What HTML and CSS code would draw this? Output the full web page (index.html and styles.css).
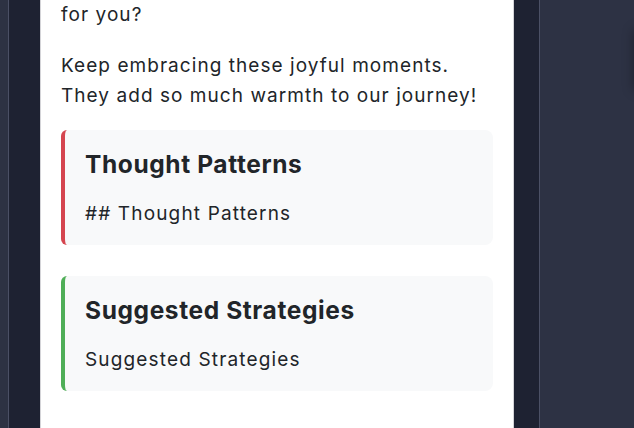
FILE: index.html
```html
<!DOCTYPE html>
<html>
<head>
<meta charset="utf-8">
<link rel="stylesheet" href="styles.css">
</head>
<body>
<div class="app">
  <div class="side-left"></div>
  <div class="gutter-left"></div>
  <main class="panel">
    <div class="content">
      <p class="para">for you?</p>
      <p class="para para-last">Keep embracing these joyful moments.<br>They add so much warmth to our journey!</p>
      <section class="card card-red">
        <h2 class="card-title">Thought Patterns</h2>
        <p class="card-text">## Thought Patterns</p>
      </section>
      <section class="card card-green">
        <h2 class="card-title">Suggested Strategies</h2>
        <p class="card-text">Suggested Strategies</p>
      </section>
    </div>
  </main>
  <div class="gutter-right"></div>
  <div class="side-right"><div class="edge-shadow"></div></div>
</div>
</body>
</html>
```
FILE: styles.css
```css
* { box-sizing: border-box; }
html, body { margin: 0; padding: 0; height: 100%; overflow: hidden; }
body {
  font-family: "Inter", "Open Sans", sans-serif;
  color: #212529;
  background: #1e2232;
}
.app {
  display: flex;
  height: 428px;
  width: 634px;
}
.side-left {
  width: 9px;
  flex: none;
  background: #2d3243;
  border-right: 1px solid #4b5065;
}
.gutter-left {
  width: 31px;
  flex: none;
  background: #1e2232;
}
.panel {
  width: 474px;
  flex: none;
  background: #ffffff;
  border-left: 1px solid #d4d4d8;
  border-right: 1px solid #d4d4d8;
  overflow: hidden;
}
.content {
  padding: 0 20px;
  margin-top: 0;
}
.para {
  margin: 0 0 21px;
  font-size: 19px;
  line-height: 30px;
  letter-spacing: 1.05px;
}
.para-last { margin-bottom: 19px; }
.card {
  background: #f8f9fa;
  border-left: 4px solid #d64550;
  border-radius: 6px 8px 8px 6px;
  padding: 16px 20px 0;
  height: 115px;
  margin-bottom: 31px;
}
.card-red { border-left-color: #d5454f; }
.card-green { border-left-color: #4fae57; }
.card-title {
  margin: 0;
  font-size: 24.5px;
  line-height: 36px;
  font-weight: 700;
  letter-spacing: 0.6px;
}
.card-text {
  margin: 18px 0 0;
  font-size: 19px;
  line-height: 28px;
  letter-spacing: 1.15px;
}
.gutter-right {
  width: 25px;
  flex: none;
  background: #1e2232;
}
.side-right {
  flex: 1;
  background: #2d3244;
  border-left: 1px solid #4b5065;
  position: relative;
  overflow: hidden;
}
.edge-shadow {
  position: absolute;
  right: -20px;
  top: 30px;
  width: 20px;
  height: 60px;
  background: #2a2e3f;
  box-shadow: 0 0 12px rgba(0,0,0,0.35);
}
```
